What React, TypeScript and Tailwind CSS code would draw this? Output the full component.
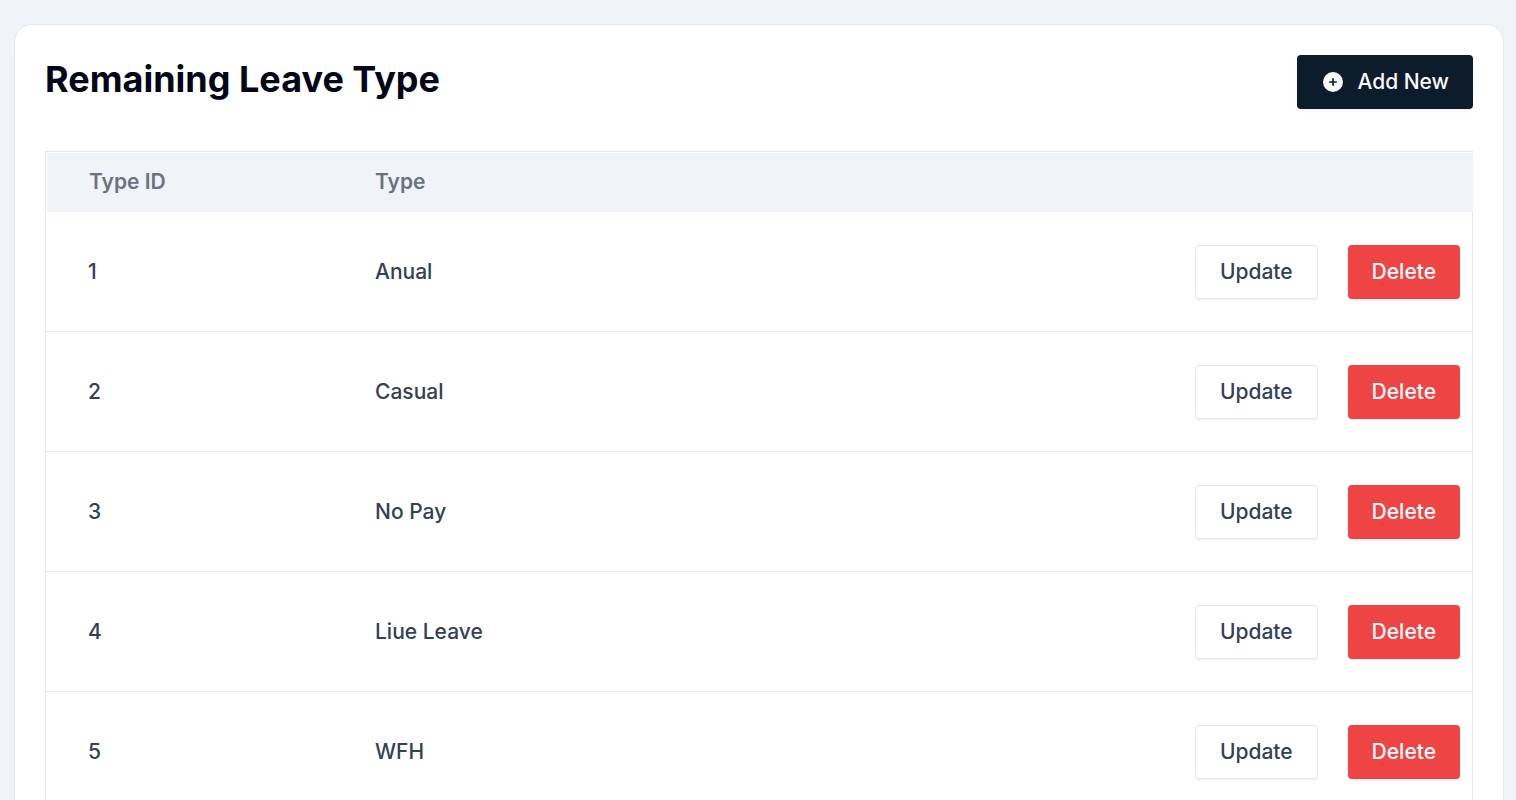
const leaveTypes = [
  { id: 1, name: "Anual" },
  { id: 2, name: "Casual" },
  { id: 3, name: "No Pay" },
  { id: 4, name: "Liue Leave" },
  { id: 5, name: "WFH" },
];

function PlusCircleIcon() {
  return (
    <svg viewBox="0 0 24 24" className="size-6" aria-hidden="true">
      <circle cx="12" cy="12" r="10" fill="#f8fafc" />
      <path d="M12 8.2v7.6M8.2 12h7.6" stroke="#0d1c2b" strokeWidth="1.7" />
    </svg>
  );
}

export default function App() {
  return (
    <main className="h-screen overflow-hidden bg-[#f0f4f9] pt-6 pr-3 pl-3.5 font-['Inter',sans-serif] text-[21px] leading-[30px] font-medium text-[#334155]">
      <section className="rounded-[18px] border border-[#e5e7eb] bg-white p-[30px]">
        <header className="flex items-start justify-between">
          <h1 className="text-4xl leading-[48px] font-bold text-[#020817]">Remaining Leave Type</h1>
          <button
            type="button"
            className="flex h-[54px] items-center gap-3 rounded-sm bg-[#0d1c2b] px-6 text-[#f8fafc] shadow-[0_2px_3px_rgba(0,0,0,0.05)]"
          >
            <PlusCircleIcon />
            Add New
          </button>
        </header>

        <table className="mt-[42px] w-full table-fixed border-separate border-spacing-0 border-t border-l border-[#e5e7eb] text-left">
          <thead>
            <tr className="h-[60px]">
              <th scope="col" className="w-[287px] border-t border-l border-white bg-[#f0f4f9] bg-clip-padding pb-0.5 pl-[42px] font-semibold text-[#6b7280]">
                Type ID
              </th>
              <th scope="col" className="border-t border-white bg-[#f0f4f9] bg-clip-padding pb-0.5 pl-[42px] font-semibold text-[#6b7280]">
                Type
              </th>
              <th scope="col" aria-label="Actions" className="border-t border-white bg-[#f0f4f9] bg-clip-padding" />
            </tr>
          </thead>
          <tbody>
            {leaveTypes.map((type) => (
              <tr key={type.id} className="h-[120px]">
                <td className="border-b border-[#e5e7eb] pl-[42px]">{type.id}</td>
                <td className="border-b border-[#e5e7eb] pl-[42px]">{type.name}</td>
                <td className="border-r border-b border-[#e5e7eb] pr-3">
                  <div className="flex justify-end gap-[30px]">
                    <button type="button" className="h-[54px] rounded-sm border border-[#e5e7eb] bg-white px-6 shadow-[0_2px_3px_rgba(0,0,0,0.05)]">
                      Update
                    </button>
                    <button type="button" className="h-[54px] rounded-sm bg-[#ef4444] px-6 text-[#f8fafc] shadow-[0_2px_3px_rgba(0,0,0,0.05)]">
                      Delete
                    </button>
                  </div>
                </td>
              </tr>
            ))}
          </tbody>
        </table>
      </section>
    </main>
  );
}
